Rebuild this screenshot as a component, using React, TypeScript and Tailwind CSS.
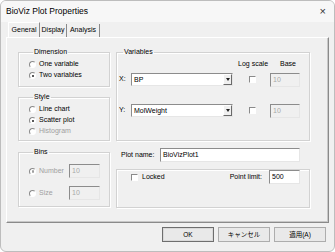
import { ReactNode } from "react";

const font = { fontFamily: '"Liberation Sans", "Noto Sans CJK JP", sans-serif' };

function Radio({ label, checked, disabled }: { label: string; checked?: boolean; disabled?: boolean }) {
  return (
    <div className={`flex items-center gap-[3px] h-[11px] ${disabled ? "text-[#a0a0a0]" : "text-black"}`}>
      <span className="relative w-[7px] h-[7px] rounded-full border border-t-[#8a8a8a] border-l-[#8a8a8a] border-r-white border-b-white bg-white">
        {checked && (
          <span className={`absolute left-[1.5px] top-[1.5px] w-[2.5px] h-[2.5px] rounded-full ${disabled ? "bg-[#a0a0a0]" : "bg-[#222]"}`} />
        )}
      </span>
      <span>{label}</span>
    </div>
  );
}

function Group({ title, className, children }: { title?: string; className?: string; children: ReactNode }) {
  return (
    <fieldset className={`border border-[#d2d2d2] shadow-[inset_1px_1px_0_#ffffff,1px_1px_0_#ffffff] ${className ?? ""}`}>
      {title && <legend className="ml-[4px] px-[1px] leading-[10px] text-black">{title}</legend>}
      {children}
    </fieldset>
  );
}

function TextBox({ value, disabled, className }: { value: string; disabled?: boolean; className?: string }) {
  return (
    <div
      className={`h-[14px] border border-t-[#8c8c8c] border-l-[#8c8c8c] border-r-[#e6e6e6] border-b-[#e6e6e6] px-[2px] leading-[12px] ${
        disabled ? "bg-[#f0f0f0] text-[#a8a8a8]" : "bg-white text-black"
      } ${className ?? ""}`}
    >
      {value}
    </div>
  );
}

function Combo({ value }: { value: string }) {
  return (
    <div className="flex w-[102px] h-[13px] border border-t-[#8c8c8c] border-l-[#8c8c8c] border-r-[#e6e6e6] border-b-[#e6e6e6] bg-white">
      <span className="flex-1 px-[2px] leading-[11px] text-black">{value}</span>
      <span className="w-[9px] h-[11px] flex items-center justify-center bg-[#f0f0f0] border border-t-white border-l-white border-r-[#6a6a6a] border-b-[#6a6a6a]">
        <span className="w-0 h-0 border-l-[2.5px] border-r-[2.5px] border-t-[3px] border-l-transparent border-r-transparent border-t-[#222]" />
      </span>
    </div>
  );
}

function Check({ label }: { label?: string }) {
  return (
    <div className="flex items-center gap-[4px]">
      <span className="w-[7px] h-[7px] border border-t-[#8a8a8a] border-l-[#8a8a8a] border-r-white border-b-white bg-white" />
      {label && <span className="text-black">{label}</span>}
    </div>
  );
}

function Button({ children, primary }: { children: ReactNode; primary?: boolean }) {
  return (
    <div
      className={`h-[15px] w-[52px] flex items-center justify-center bg-[#e9e9e9] text-black ${
        primary ? "border border-[#6e6e6e] shadow-[inset_0_0_0_1px_#d9d9d9]" : "border border-[#adadad]"
      }`}
    >
      {children}
    </div>
  );
}

export default function App() {
  return (
    <div
      style={font}
      className="w-[335px] h-[252px] bg-[#f0f0f0] text-[7px] rounded-[6px] border border-[#bdbdbd] overflow-hidden flex flex-col"
    >
      <div className="h-[21px] shrink-0 flex items-center justify-between pl-[5px] pr-[8px] bg-[#f7f7f7] text-black text-[8.5px]">
        <span>BioViz Plot Properties</span>
        <span className="text-[11px] text-[#333] leading-none">×</span>
      </div>

      <div className="flex items-end pl-[7px] h-[15px] text-black">
        <div className="h-[15px] w-[32px] flex items-center justify-center border border-b-0 border-t-white border-l-white border-r-[#8a8a8a] bg-[#f0f0f0] relative z-10">
          General
        </div>
        <div className="h-[13px] w-[27px] flex items-center justify-center border-r border-[#8a8a8a]">Display</div>
        <div className="h-[13px] w-[33px] flex items-center justify-center border-r border-[#8a8a8a]">Analysis</div>
      </div>

      <div className="mx-[5px] h-[186px] border border-t-white border-l-white border-r-[#8a8a8a] border-b-[#8a8a8a] shadow-[inset_-1px_-1px_0_#c8c8c8] flex gap-[6px] pl-[11px] pt-[9px]">
        <div className="w-[92px] flex flex-col">
          <Group title="Dimension" className="h-[40px] pl-[10px] pt-[2px]">
            <Radio label="One variable" />
            <Radio label="Two variables" checked />
          </Group>
          <Group title="Style" className="mt-[5px] h-[49px] pl-[10px] pt-[2px]">
            <Radio label="Line chart" />
            <Radio label="Scatter plot" checked />
            <Radio label="Histogram" disabled />
          </Group>
          <Group title="Bins" className="mt-[6px] h-[60px] pl-[10px] pt-[7px]">
            <div className="flex items-center justify-between pr-[9px]">
              <Radio label="Number" checked disabled />
              <TextBox value="10" disabled className="w-[31px]" />
            </div>
            <div className="mt-[8px] flex items-center justify-between pr-[9px]">
              <Radio label="Size" disabled />
              <TextBox value="10" disabled className="w-[31px]" />
            </div>
          </Group>
        </div>

        <div className="w-[194px] flex flex-col">
          <Group title="Variables" className="h-[94px] pl-[2px] pt-[2px]">
            <div className="flex justify-end text-black pr-[13px] gap-[12px]">
              <span>Log scale</span>
              <span>Base</span>
            </div>
            <div className="mt-[3px] flex items-center">
              <span className="w-[12px] text-black">X:</span>
              <Combo value="BP" />
              <span className="ml-[16px]"><Check /></span>
              <TextBox value="10" disabled className="ml-[14px] w-[30px]" />
            </div>
            <div className="mt-[17px] flex items-center">
              <span className="w-[12px] text-black">Y:</span>
              <Combo value="MolWeight" />
              <span className="ml-[16px]"><Check /></span>
              <TextBox value="10" disabled className="ml-[14px] w-[30px]" />
            </div>
          </Group>
          <div className="mt-[7px] flex items-center pl-[5px]">
            <span className="w-[39px] text-black">Plot name:</span>
            <TextBox value="BioVizPlot1" className="w-[140px]" />
          </div>
          <Group className="mt-[7px] h-[39px] flex items-center justify-between pl-[14px] pr-[9px]">
            <Check label="Locked" />
            <div className="flex items-center gap-[7px]">
              <span className="text-black">Point limit:</span>
              <TextBox value="500" className="w-[31px]" />
            </div>
          </Group>
        </div>
      </div>

      <div className="flex justify-end gap-[4px] pr-[8px] mt-[4px] text-[6.5px]">
        <Button primary>OK</Button>
        <Button>キャンセル</Button>
        <Button>適用(A)</Button>
      </div>
    </div>
  );
}
